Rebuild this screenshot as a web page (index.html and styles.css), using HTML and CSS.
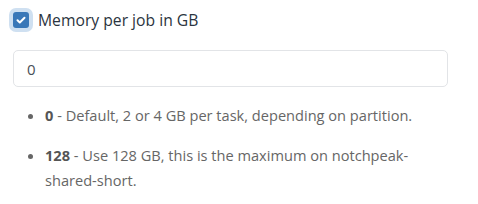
FILE: index.html
```html
<!DOCTYPE html>
<html lang="en">
<head>
    <meta charset="UTF-8">
    <title>Memory per job</title>
    <link rel="stylesheet" href="styles.css">
</head>
<body>
    <div class="field">
        <label class="check">
            <span class="check-box">
                <svg viewBox="0 0 16 16" width="16" height="16"><path d="M4.5 8.3l2.3 2.2 4.7-4.8" fill="none" stroke="#fff" stroke-width="2" stroke-linecap="round" stroke-linejoin="round"/></svg>
            </span>
            <span class="check-label">Memory per job in GB</span>
        </label>
        <input class="text-input" type="text" value="0">
        <ul class="hints">
            <li><b>0</b> - Default, 2 or 4 GB per task, depending on partition.</li>
            <li><b>128</b> - Use 128 GB, this is the maximum on notchpeak-shared-short.</li>
        </ul>
    </div>
</body>
</html>
```

FILE: styles.css
```css
body {
    margin: 0;
    font-family: 'Open Sans', Arial, sans-serif;
    background: #fff;
    color: #333;
}
.field {
    padding: 12px 30px 0 13px;
}
.check {
    display: flex;
    align-items: center;
    gap: 9px;
    height: 16px;
}
.check-box {
    width: 16px;
    height: 16px;
    border-radius: 3px;
    background: #3a78b8;
    box-shadow: 0 0 0 4px #cfe0f1;
    display: flex;
}
.check-label {
    font-size: 15.7px;
    color: #2b3440;
}
.text-input {
    display: block;
    box-sizing: border-box;
    width: 435px;
    height: 37px;
    margin-top: 22px;
    padding: 0 13px;
    border: 1px solid #e2e4e7;
    border-radius: 5px;
    font-family: inherit;
    font-size: 15px;
    color: #495057;
}
.hints {
    margin: 16px 0 0;
    padding-left: 32px;
    font-size: 14.6px;
    line-height: 25px;
    color: #666;
}
.hints li {
    margin-bottom: 15px;
}
.hints b {
    color: #555;
}
```
